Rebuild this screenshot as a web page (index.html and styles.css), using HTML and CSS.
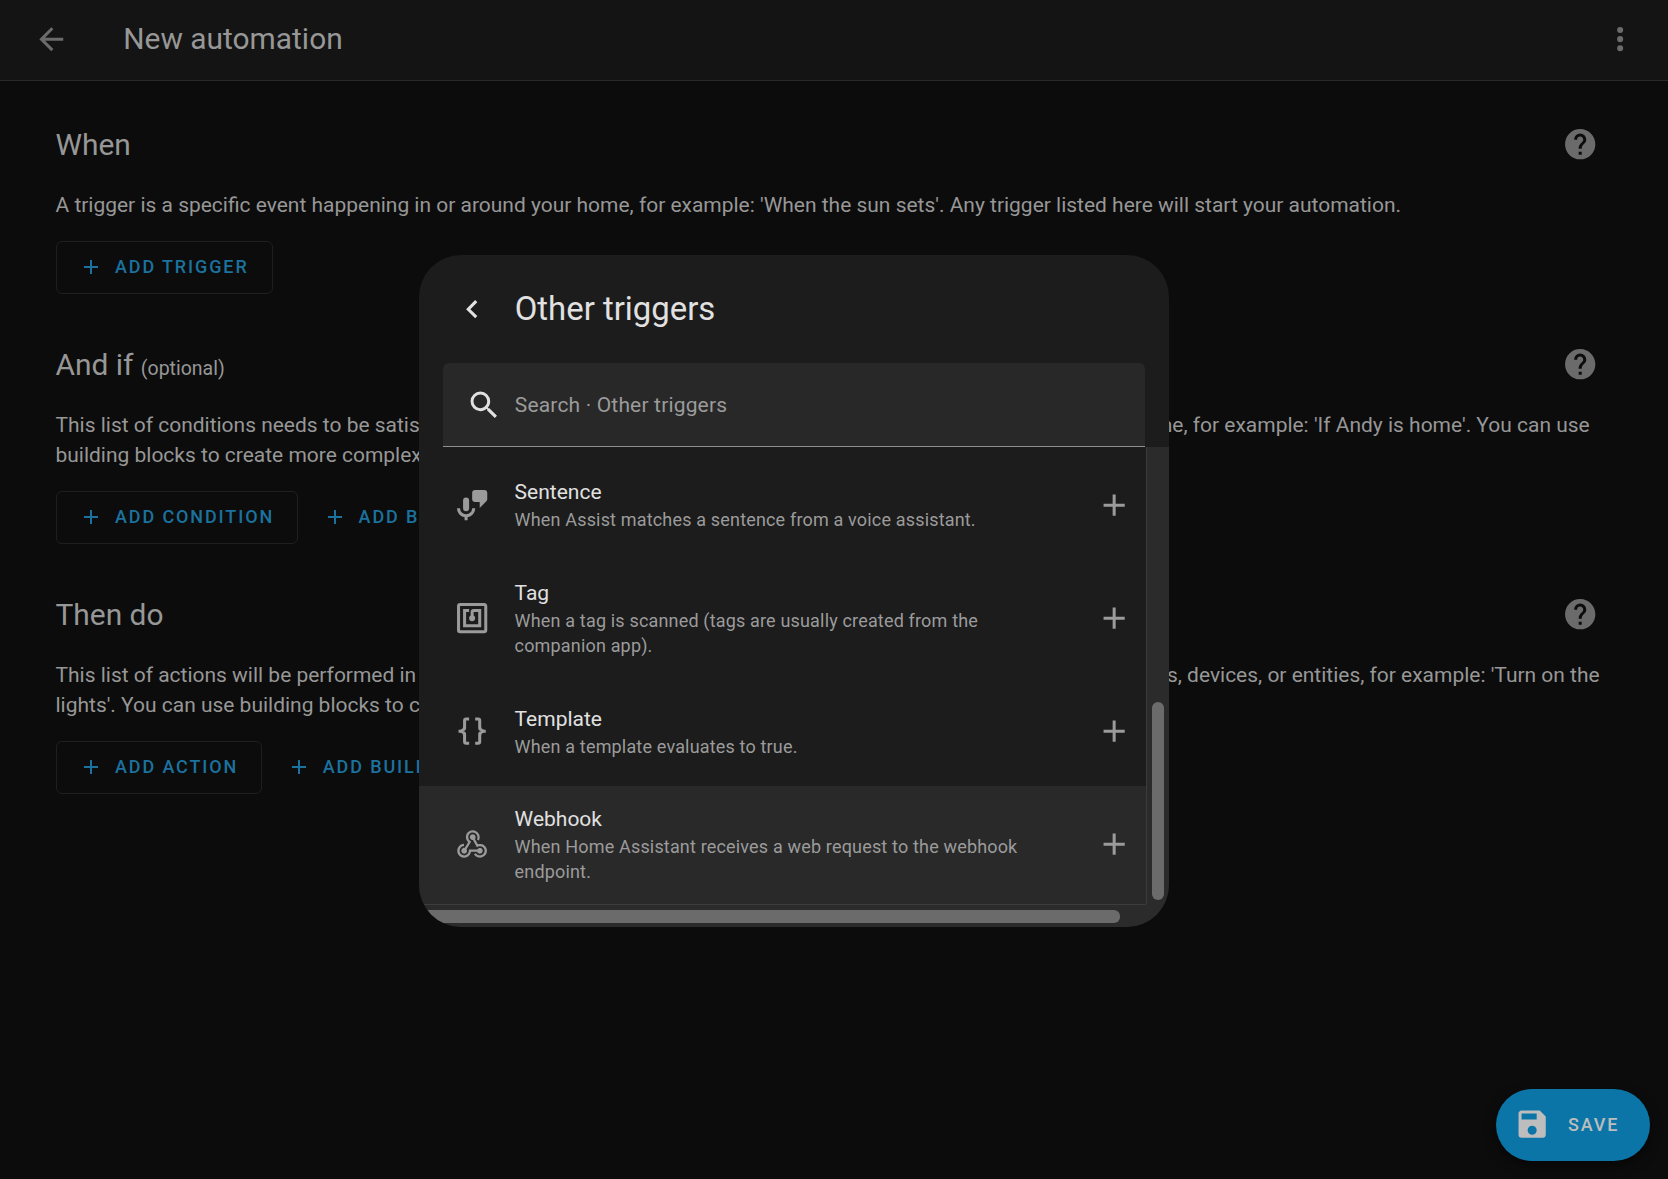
FILE: index.html
```html
<!DOCTYPE html>
<html lang="en">
<head>
<meta charset="utf-8">
<title>New automation</title>
<link rel="stylesheet" href="styles.css">
</head>
<body>
<svg class="defs" width="0" height="0" aria-hidden="true">
  <symbol id="plus" viewBox="0 0 24 24"><path d="M19,13H13V19H11V13H5V11H11V5H13V11H19V13Z"/></symbol>
  <symbol id="help" viewBox="0 0 24 24"><path d="M15.07,11.25L14.17,12.17C13.45,12.89 13,13.5 13,15H11V14.5C11,13.39 11.45,12.39 12.17,11.67L13.41,10.41C13.78,10.05 14,9.55 14,9C14,7.89 13.1,7 12,7A2,2 0 0,0 10,9H8A4,4 0 0,1 12,5A4,4 0 0,1 16,9C16,9.88 15.64,10.67 15.07,11.25M13,19H11V17H13M12,2A10,10 0 0,0 2,12A10,10 0 0,0 12,22A10,10 0 0,0 22,12C22,6.47 17.5,2 12,2Z"/></symbol>
</svg>

<header class="topbar">
  <svg class="icon" viewBox="0 0 24 24"><path d="M20,11V13H8L13.5,18.5L12.08,19.92L4.16,12L12.08,4.08L13.5,5.5L8,11H20Z"/></svg>
  <h1 class="topbar-title">New automation</h1>
  <svg class="icon" viewBox="0 0 24 24"><path d="M12,16A2,2 0 0,1 14,18A2,2 0 0,1 12,20A2,2 0 0,1 10,18A2,2 0 0,1 12,16M12,10A2,2 0 0,1 14,12A2,2 0 0,1 12,14A2,2 0 0,1 10,12A2,2 0 0,1 12,10M12,4A2,2 0 0,1 14,6A2,2 0 0,1 12,8A2,2 0 0,1 10,6A2,2 0 0,1 12,4Z"/></svg>
</header>

<main class="content">
  <section class="section">
    <div class="section-head"><h2>When</h2><svg class="help"><use href="#help"/></svg></div>
    <p>A trigger is a specific event happening in or around your home, for example: 'When the sun sets'. Any trigger listed here will start your automation.</p>
    <div class="buttons">
      <button class="btn outlined"><svg><use href="#plus"/></svg>ADD TRIGGER</button>
    </div>
  </section>
  <section class="section">
    <div class="section-head"><h2>And if <small>(optional)</small></h2><svg class="help"><use href="#help"/></svg></div>
    <p>This list of conditions needs to be satisfied for the automation to run. A condition can be satisfied or not at any given time, for example: 'If Andy is home'. You can use building blocks to create more complex conditions.</p>
    <div class="buttons">
      <button class="btn outlined"><svg><use href="#plus"/></svg>ADD CONDITION</button>
      <button class="btn"><svg><use href="#plus"/></svg>ADD BUILDING BLOCK</button>
    </div>
  </section>
  <section class="section">
    <div class="section-head"><h2>Then do</h2><svg class="help"><use href="#help"/></svg></div>
    <p>This list of actions will be performed in sequence when the automation runs. An action usually controls one of your areas, devices, or entities, for example: 'Turn on the lights'. You can use building blocks to create more complex sequences of actions.</p>
    <div class="buttons">
      <button class="btn outlined"><svg><use href="#plus"/></svg>ADD ACTION</button>
      <button class="btn"><svg><use href="#plus"/></svg>ADD BUILDING BLOCK</button>
    </div>
  </section>
</main>

<button class="fab">
  <svg class="icon" viewBox="0 0 24 24"><path d="M15,9H5V5H15M12,19A3,3 0 0,1 9,16A3,3 0 0,1 12,13A3,3 0 0,1 15,16A3,3 0 0,1 12,19M17,3H5C3.89,3 3,3.9 3,5V19A2,2 0 0,0 5,21H19A2,2 0 0,0 21,19V7L17,3Z"/></svg>
  <span>SAVE</span>
</button>

<div class="dialog" role="dialog">
  <div class="dialog-head">
    <svg class="icon" viewBox="0 0 24 24"><path d="M15.41,16.58L10.83,12L15.41,7.41L14,6L8,12L14,18L15.41,16.58Z"/></svg>
    <h2>Other triggers</h2>
  </div>
  <div class="search">
    <svg class="icon" viewBox="0 0 24 24"><path d="M9.5,3A6.5,6.5 0 0,1 16,9.5C16,11.11 15.41,12.59 14.44,13.73L14.71,14H15.5L20.5,19L19,20.5L14,15.5V14.71L13.73,14.44C12.59,15.41 11.11,16 9.5,16A6.5,6.5 0 0,1 3,9.5A6.5,6.5 0 0,1 9.5,3M9.5,5C7,5 5,7 5,9.5C5,12 7,14 9.5,14C12,14 14,12 14,9.5C14,7 12,5 9.5,5Z"/></svg>
    <span>Search · Other triggers</span>
  </div>
  <div class="scroller">
    <ul class="list">
      <li class="row">
        <svg class="icon" viewBox="0 0 24 24"><path d="M8,7A2,2 0 0,1 10,9V14A2,2 0 0,1 8,16A2,2 0 0,1 6,14V9A2,2 0 0,1 8,7M14,14C14,16.97 11.84,19.44 9,19.92V22H7V19.92C4.16,19.44 2,16.97 2,14H4A4,4 0 0,0 8,18A4,4 0 0,0 12,14H14M21.41,9.41L17,13.83V10H14A2,2 0 0,1 12,8V4A2,2 0 0,1 14,2H20A2,2 0 0,1 22,4V8C22,8.55 21.78,9.05 21.41,9.41Z"/></svg>
        <div class="row-text"><h3>Sentence</h3><p>When Assist matches a sentence from a voice assistant.</p></div>
        <svg class="icon"><use href="#plus"/></svg>
      </li>
      <li class="row">
        <svg class="icon" viewBox="0 0 24 24"><path d="M18,6H13A2,2 0 0,0 11,8V10.28C10.41,10.62 10,11.26 10,12A2,2 0 0,0 12,14C13.11,14 14,13.1 14,12C14,11.26 13.6,10.62 13,10.28V8H16V16H8V8H10V6H8L6,6V18H18M20,20H4V4H20M20,2H4A2,2 0 0,0 2,4V20A2,2 0 0,0 4,22H20C21.11,22 22,21.1 22,20V4C22,2.89 21.11,2 20,2Z"/></svg>
        <div class="row-text"><h3>Tag</h3><p>When a tag is scanned (tags are usually created from the companion app).</p></div>
        <svg class="icon"><use href="#plus"/></svg>
      </li>
      <li class="row">
        <svg class="icon" viewBox="0 0 24 24"><path d="M8,3A2,2 0 0,0 6,5V9A2,2 0 0,1 4,11H3V13H4A2,2 0 0,1 6,15V19A2,2 0 0,0 8,21H10V19H8V14A2,2 0 0,0 6,12A2,2 0 0,0 8,10V5H10V3M16,3A2,2 0 0,1 18,5V9A2,2 0 0,0 20,11H21V13H20A2,2 0 0,0 18,15V19A2,2 0 0,1 16,21H14V19H16V14A2,2 0 0,1 18,12A2,2 0 0,1 16,10V5H14V3H16Z"/></svg>
        <div class="row-text"><h3>Template</h3><p>When a template evaluates to true.</p></div>
        <svg class="icon"><use href="#plus"/></svg>
      </li>
      <li class="row hovered">
        <svg class="icon" viewBox="0 0 24 24"><path d="M10.46,19C9,21.07 6.15,21.59 4.09,20.15C2.04,18.71 1.56,15.84 3,13.75C3.87,12.5 5.21,11.83 6.58,11.77L6.63,13.2C5.72,13.27 4.84,13.74 4.27,14.56C3.27,16 3.58,17.94 4.95,18.91C6.33,19.87 8.26,19.5 9.26,18.07C9.57,17.62 9.75,17.13 9.82,16.63V15.62L15.4,15.58L15.47,15.47C16,14.55 17.15,14.23 18.05,14.75C18.95,15.27 19.26,16.43 18.73,17.35C18.2,18.26 17.04,18.58 16.14,18.06C15.73,17.83 15.44,17.46 15.31,17.04L11.24,17.06C11.13,17.73 10.87,18.38 10.46,19M17.74,11.86C20.27,12.17 22.07,14.44 21.76,16.93C21.45,19.43 19.15,21.2 16.62,20.89C15.13,20.71 13.9,19.86 13.19,18.68L14.43,17.96C14.92,18.73 15.75,19.28 16.75,19.41C18.5,19.62 20.05,18.43 20.26,16.76C20.47,15.09 19.23,13.56 17.5,13.35C16.96,13.29 16.44,13.36 15.97,13.53L15.12,13.97L12.54,9.2H12.32C11.26,9.16 10.41,8.29 10.44,7.25C10.47,6.21 11.4,5.4 12.45,5.44C13.5,5.5 14.33,6.35 14.3,7.39C14.28,7.83 14.11,8.23 13.84,8.54L15.74,12.05C16.36,11.85 17.04,11.78 17.74,11.86M8.25,9.14C7.25,6.79 8.31,4.1 10.62,3.12C12.94,2.14 15.62,3.25 16.62,5.6C17.21,6.97 17.09,8.47 16.42,9.67L15.18,8.95C15.6,8.14 15.67,7.15 15.27,6.22C14.59,4.62 12.78,3.85 11.23,4.5C9.67,5.16 8.97,7 9.65,8.6C9.93,9.26 10.4,9.77 10.97,10.11L11.36,10.32L8.29,15.31C8.32,15.36 8.36,15.42 8.39,15.5C8.88,16.41 8.54,17.56 7.62,18.05C6.71,18.54 5.56,18.18 5.06,17.24C4.57,16.31 4.91,15.16 5.83,14.67C6.22,14.46 6.65,14.41 7.06,14.5L9.37,10.73C8.9,10.3 8.5,9.76 8.25,9.14Z"/></svg>
        <div class="row-text"><h3>Webhook</h3><p>When Home Assistant receives a web request to the webhook endpoint.</p></div>
        <svg class="icon"><use href="#plus"/></svg>
      </li>
    </ul>
    <div class="vbar"><div class="vthumb"></div></div>
    <div class="hbar"><div class="hthumb"></div></div>
    <div class="corner"></div>
  </div>
</div>
</body>
</html>
```
FILE: styles.css
```css
* { box-sizing: border-box; }

body {
  margin: 0;
  height: 1179px;
  overflow: hidden;
  position: relative;
  background: #0c0c0c;
  color: #979797;
  font-family: Roboto, "Liberation Sans", sans-serif;
}

h1, h2, h3, p, ul { margin: 0; padding: 0; font-weight: 400; }

svg { display: block; flex: none; fill: currentColor; }
.defs { position: absolute; }
.icon { width: 36.3px; height: 36.3px; }

/* Top bar */
.topbar {
  display: flex;
  align-items: center;
  height: 81px;
  padding: 0 30px 2px 33px;
  background: #141414;
  border-bottom: 1px solid #2a2a2a;
}
.topbar .icon { color: #6b6b6b; }
.topbar-title { flex: 1; padding-left: 54px; font-size: 29.9px; line-height: 36px; }

/* Page sections */
.content { padding: 45px 56px 0 55.5px; }
.section { margin-bottom: 51.8px; }
.section-head {
  display: flex;
  align-items: center;
  justify-content: space-between;
  height: 36.4px;
  margin-bottom: 27.6px;
  padding-right: 14px;
}
.section-head h2 { padding-top: 2px; font-size: 29.9px; line-height: 36px; }
.section-head small { font-size: 19.5px; line-height: 1; }
.help { width: 36.4px; height: 36.4px; color: #6b6b6b; }
.section p { font-size: 20.98px; line-height: 30.1px; margin-bottom: 20.6px; }

.buttons { display: flex; gap: 12.5px; height: 53.4px; }
.btn {
  display: flex;
  align-items: center;
  gap: 12px;
  padding: 0 12px 1px;
  border: 0;
  border-radius: 6px;
  background: none;
  color: #1b729f;
  font: 500 18px Roboto, "Liberation Sans", sans-serif;
  letter-spacing: 1.88px;
  white-space: nowrap;
}
.btn svg { width: 24px; height: 24px; }
.btn.outlined { padding: 0 23px 1px 22.5px; border: 1px solid #1f1f1f; }

/* Save button */
.fab {
  position: absolute;
  right: 18px;
  bottom: 18.5px;
  display: flex;
  align-items: center;
  gap: 18px;
  width: 154px;
  height: 72px;
  padding: 0 0 0 17.7px;
  border: 0;
  border-radius: 36px;
  background: #0b75a7;
  color: #bdbdbd;
  font: 500 18px Roboto, "Liberation Sans", sans-serif;
  letter-spacing: 1.88px;
  box-shadow: 0 4px 12px rgba(0, 0, 0, 0.5);
}

/* Dialog */
.dialog {
  position: absolute;
  left: 418.5px;
  top: 255px;
  width: 750px;
  height: 671.5px;
  display: flex;
  flex-direction: column;
  border-radius: 42px;
  overflow: hidden;
  background: #1c1c1c;
  color: #e1e1e1;
}
.dialog-head { display: flex; align-items: center; gap: 24.5px; height: 108px; padding-left: 35.4px; }
.dialog-head h2 { font-size: 32.9px; line-height: 40px; }

.search {
  display: flex;
  align-items: center;
  flex: none;
  gap: 12.7px;
  width: 702px;
  height: 84px;
  margin-left: 24px;
  padding: 1.5px 0 0 23.3px;
  border-bottom: 1.5px solid #909090;
  border-radius: 6px 6px 0 0;
  background: #282828;
}
.search span { color: #9b9b9b; font-size: 21px; letter-spacing: 0.17px; }

.scroller {
  flex: 1;
  min-height: 0;
  display: grid;
  grid-template-columns: 1fr 22.5px;
  grid-template-rows: 1fr 22.5px;
}
.list { display: flex; flex-direction: column; justify-content: flex-end; gap: 7.4px; list-style: none; }
.row { display: flex; align-items: center; padding: 18.6px 13.3px 19.4px 35.6px; }
.row .icon { color: #9b9b9b; }
.row-text { flex: 1; padding: 0 62px 0 24.2px; }
.row h3 { font-size: 21px; line-height: 30px; }
.row p { color: #9b9b9b; font-size: 18px; line-height: 25.2px; letter-spacing: 0.17px; }
.row.hovered { background: #292929; }

.vbar { padding: 255.3px 0 0 5px; background: #2b2b2b; border-left: 1px solid #3c3c3c; }
.vthumb { width: 12px; height: 198px; border-radius: 6px; background: #6b6b6b; }
.hbar { padding-top: 5px; background: #2b2b2b; border-top: 1px solid #3c3c3c; }
.hthumb { width: 701px; height: 12.5px; border-radius: 6px; background: #6b6b6b; }
.corner { background: #2b2b2b; }
```
